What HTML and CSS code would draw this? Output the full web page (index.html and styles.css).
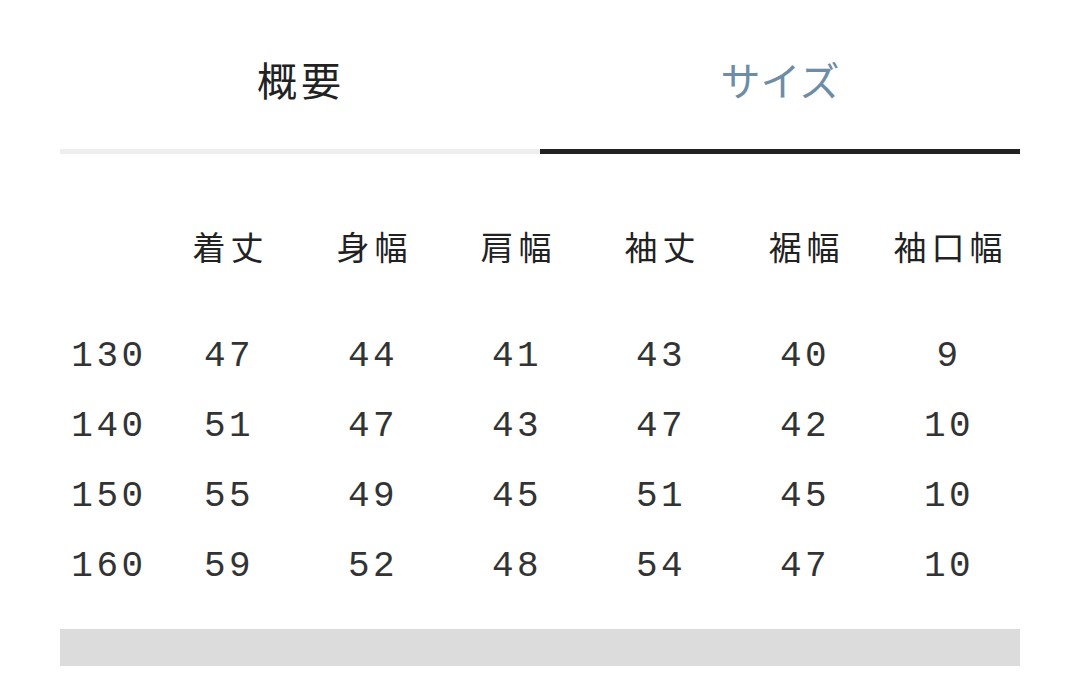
FILE: index.html
```html
<!DOCTYPE html>
<html lang="ja">
<head>
<meta charset="utf-8">
<link rel="stylesheet" href="styles.css">
</head>
<body>
<div class="tabs">
  <div class="tab">概要</div>
  <div class="tab tab-active">サイズ</div>
</div>
<div class="size-table">
  <div class="row row-head">
    <div class="cell"></div>
    <div class="cell">着丈</div>
    <div class="cell">身幅</div>
    <div class="cell">肩幅</div>
    <div class="cell">袖丈</div>
    <div class="cell">裾幅</div>
    <div class="cell">袖口幅</div>
  </div>
  <div class="row">
    <div class="cell">130</div><div class="cell">47</div><div class="cell">44</div><div class="cell">41</div><div class="cell">43</div><div class="cell">40</div><div class="cell">9</div>
  </div>
  <div class="row">
    <div class="cell">140</div><div class="cell">51</div><div class="cell">47</div><div class="cell">43</div><div class="cell">47</div><div class="cell">42</div><div class="cell">10</div>
  </div>
  <div class="row">
    <div class="cell">150</div><div class="cell">55</div><div class="cell">49</div><div class="cell">45</div><div class="cell">51</div><div class="cell">45</div><div class="cell">10</div>
  </div>
  <div class="row">
    <div class="cell">160</div><div class="cell">59</div><div class="cell">52</div><div class="cell">48</div><div class="cell">54</div><div class="cell">47</div><div class="cell">10</div>
  </div>
</div>
<div class="bottom-bar"></div>
</body>
</html>
```
FILE: styles.css
```css
html, body {
  margin: 0;
  padding: 0;
  background: #ffffff;
  color: #222222;
  font-family: "Noto Sans CJK JP", "Noto Sans", sans-serif;
  overflow: hidden;
}

.tabs {
  display: flex;
  width: 960px;
  margin: 0 0 0 60px;
}

.tab {
  flex: 1;
  text-align: center;
  font-size: 40px;
  line-height: 40px;
  letter-spacing: 4px;
  text-indent: 2px;
  padding-top: 59px;
  padding-bottom: 50px;
  border-bottom: 5px solid #eeeeee;
}

.tab-active {
  color: #6e8ca5;
  letter-spacing: 0;
  text-indent: 0;
  border-bottom-color: #222222;
}

.size-table {
  width: 960px;
  margin: 57px 0 0 60px;
}

.row {
  display: grid;
  grid-template-columns: 96px repeat(6, 144px);
  height: 70px;
  line-height: 70px;
  font-family: "Liberation Mono", monospace;
  font-size: 36px;
  letter-spacing: 3.5px;
  color: #333333;
}

.row-head {
  font-family: "Noto Sans CJK JP", "Noto Sans", sans-serif;
  font-size: 33px;
  letter-spacing: 5px;
  color: #222222;
  margin-bottom: 41px;
}

.row .cell {
  text-align: center;
  text-indent: 2px;
  white-space: nowrap;
}

.row-head .cell {
  text-indent: 5px;
}

.bottom-bar {
  width: 960px;
  margin: 27px 0 0 60px;
  height: 37px;
  background: #dcdcdc;
}
```
